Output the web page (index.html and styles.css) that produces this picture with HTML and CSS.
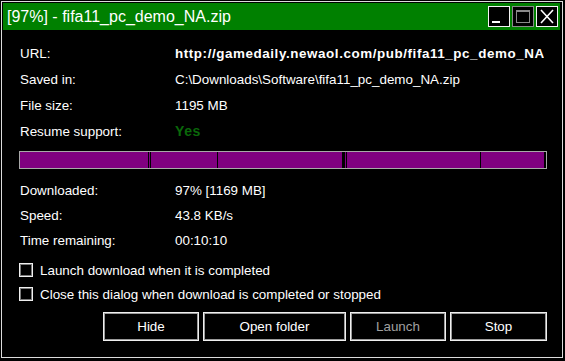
FILE: index.html
```html
<!DOCTYPE html>
<html lang="en">
  <head>
    <meta charset="UTF-8">
    <meta name="viewport" content="width=device-width, initial-scale=1.0">
    <title>Download progress</title>
    <link rel="stylesheet" href="styles.css">
  </head>
  <body>
    <div class="window">
      <div class="titlebar">
        <span class="title">[97%] - fifa11_pc_demo_NA.zip</span>
        <div class="controls">
          <button class="ctl"><svg width="20" height="19" viewBox="0 0 20 19"><rect x="3" y="14" width="8" height="2" fill="#fff"/></svg></button>
          <button class="ctl disabled"><svg width="20" height="19" viewBox="0 0 20 19"><rect x="3.5" y="3.5" width="13" height="12" fill="none" stroke="#8a8a8a"/><rect x="4" y="4" width="12" height="1" fill="#8a8a8a"/></svg></button>
          <button class="ctl"><svg width="20" height="19" viewBox="0 0 20 19"><path d="M4 3 L16 16 M16 3 L4 16" stroke="#fff" stroke-width="1.6"/></svg></button>
        </div>
      </div>

      <div class="content">
        <div class="info">
          <span>URL:</span>
          <span class="value strong clip">http://gamedaily.newaol.com/pub/fifa11_pc_demo_NA.zip</span>
          <span>Saved in:</span>
          <span class="value">C:\Downloads\Software\fifa11_pc_demo_NA.zip</span>
          <span>File size:</span>
          <span class="value">1195 MB</span>
          <span>Resume support:</span>
          <span class="value yes">Yes</span>
        </div>

        <!-- one span per download thread -->
        <div class="progress">
          <span class="seg" style="width:128px;margin-right:1px"></span>
          <span class="seg" style="width:1px;margin-right:1px"></span>
          <span class="seg" style="width:66px;margin-right:1px"></span>
          <span class="seg" style="width:125px;margin-right:3px"></span>
          <span class="seg" style="width:1px;margin-right:1px"></span>
          <span class="seg" style="width:133px;margin-right:1px"></span>
          <span class="seg" style="width:63px;margin-right:2px"></span>
        </div>

        <div class="info stats">
          <span>Downloaded:</span>
          <span class="value">97% [1169 MB]</span>
          <span>Speed:</span>
          <span class="value">43.8 KB/s</span>
          <span>Time remaining:</span>
          <span class="value">00:10:10</span>
        </div>

        <div class="checks">
          <label class="check"><span class="box"></span>Launch download when it is completed</label>
          <label class="check"><span class="box"></span>Close this dialog when download is completed or stopped</label>
        </div>

        <div class="buttons">
          <button class="btn small">Hide</button>
          <button class="btn wide">Open folder</button>
          <button class="btn small disabled">Launch</button>
          <button class="btn stop">Stop</button>
        </div>
      </div>
    </div>
  </body>
</html>
```

FILE: styles.css
```css
*{
    margin: 0;
    padding: 0;
    box-sizing: border-box;
}

body{
    background: #000;
    font-family: "Liberation Sans", Arial, sans-serif;
    color: #fff;
    width: 565px;
    height: 361px;
    overflow: hidden;
}

.window{
    margin: 1px 0 0 1px;
    width: 562px;
    height: 357px;
    border: 1px solid #dcdcdc;
    padding: 1px;
}

.titlebar{
    height: 27px;
    width: 557px;
    background: #008000;
    display: flex;
    align-items: center;
    justify-content: space-between;
    padding: 0 2px 0 4px;
}

.title{
    font-size: 16px;
    line-height: 27px;
}

.controls{
    display: flex;
    gap: 2px;
}

.ctl{
    width: 22px;
    height: 21px;
    background: #000;
    border: 1px solid #f4f4f4;
    display: flex;
    align-items: center;
    justify-content: center;
}

.ctl.disabled{
    border-color: #8a8a8a;
}

.content{
    padding: 10px 14px 0 16px;
    font-size: 13.4px;
}

.info{
    display: grid;
    grid-template-columns: 155px 1fr;
    grid-auto-rows: 26px;
    align-items: center;
    margin-left: 1px;
}

.value{
    white-space: nowrap;
}

.clip{
    overflow: hidden;
    width: 369px;
}

.strong{
    font-weight: bold;
    letter-spacing: 0.58px;
}

.yes{
    color: #0a680a;
    font-weight: bold;
    font-size: 14px;
    letter-spacing: 0.6px;
}

.progress{
    margin-top: 7px;
    height: 18px;
    border: 1px solid #a8a8a8;
    background: #000;
    display: flex;
}

.seg{
    background: #800080;
    height: 16px;
}

.stats{
    margin-top: 9px;
    grid-auto-rows: 25px;
}

.checks{
    margin-top: 5px;
}

.check{
    display: flex;
    align-items: center;
    height: 24px;
}

.box{
    width: 14px;
    height: 14px;
    border: 1px solid #f0f0f0;
    box-shadow: inset 0 0 0 1px #7a7a7a;
    margin-right: 7px;
}

.buttons{
    margin-top: 6px;
    display: flex;
    justify-content: flex-end;
    gap: 4px;
}

.btn{
    height: 29px;
    background: #000;
    color: #fff;
    font-family: "Liberation Sans", Arial, sans-serif;
    font-size: 13.4px;
    border: 1px solid #f0f0f0;
    box-shadow: inset 0 0 0 1px #9a9a9a;
}

.btn.small{
    width: 96px;
}

.btn.wide{
    width: 143px;
}

.btn.stop{
    width: 97px;
}

.btn.disabled{
    color: #a0a0a0;
}
```
